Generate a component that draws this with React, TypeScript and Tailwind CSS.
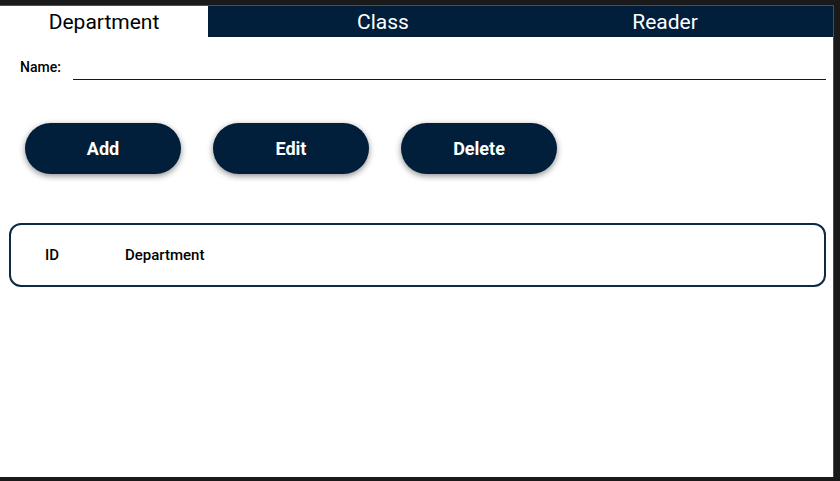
import React, { useState } from 'react'

const tabs = [
  { name: 'Department', w: 'w-[208px]' },
  { name: 'Class', w: 'w-[350px]' },
  { name: 'Reader', w: 'w-[214px]' },
]

export default function App() {
  const [active, setActive] = useState('Department')
  const [name, setName] = useState('')

  return (
    <div className="w-[840px] h-[481px] bg-[#1a1a1a] pt-[5px] pr-[6px] pb-[4px] font-['Roboto',sans-serif]">
      <div className="h-full bg-white border-t border-r border-[#4a4f55] flex flex-col">
        {/* Tabs */}
        <div className="flex h-[31px] bg-[#011f3a]">
          {tabs.map(t => (
            <button
              key={t.name}
              onClick={() => setActive(t.name)}
              className={`${t.w} h-full pt-[2px] text-[21px] leading-none ${active === t.name ? 'bg-white text-black' : 'text-white'}`}
            >
              {t.name}
            </button>
          ))}
        </div>

        {/* Name field */}
        <div className="flex items-end pl-[20px] pr-[7px] mt-[23px]">
          <label className="text-[14px] font-medium text-black leading-none mb-[6px]">Name:</label>
          <input
            value={name}
            onChange={e => setName(e.target.value)}
            className="flex-1 ml-[12px] h-[20px] border-b border-[#0b1a2a] outline-none text-[13px]"
          />
        </div>

        {/* Actions */}
        <div className="flex gap-[32px] pl-[25px] mt-[43px]">
          {['Add', 'Edit', 'Delete'].map(b => (
            <button
              key={b}
              className="w-[156px] h-[51px] rounded-full bg-[#011f3a] text-white text-[18px] font-bold shadow-[0_2px_6px_rgba(0,0,0,0.45)]"
            >
              {b}
            </button>
          ))}
        </div>

        {/* Table */}
        <div className="mt-[49px] ml-[9px] mr-[7px] h-[64px] border-2 border-[#0e2a44] rounded-[12px] flex items-center">
          <span className="w-[114px] pl-[34px] text-[15px] font-medium text-black">ID</span>
          <span className="text-[15px] font-medium text-black">Department</span>
        </div>
      </div>
    </div>
  )
}
